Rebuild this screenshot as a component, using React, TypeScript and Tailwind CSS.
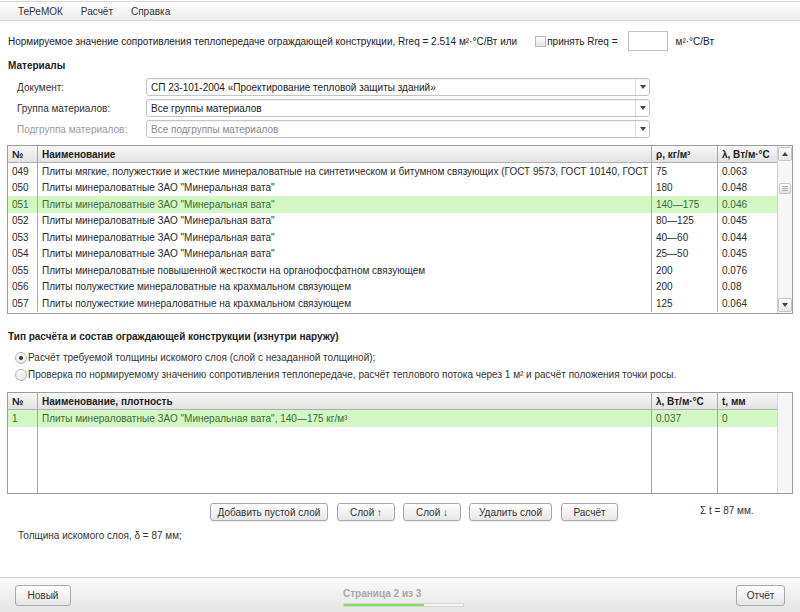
import React from 'react'

const rows = [
  ['049', 'Плиты мягкие, полужесткие и жесткие минераловатные на синтетическом и битумном связующих (ГОСТ 9573, ГОСТ 10140, ГОСТ', '75', '0.063'],
  ['050', 'Плиты минераловатные ЗАО "Минеральная вата"', '180', '0.048'],
  ['051', 'Плиты минераловатные ЗАО "Минеральная вата"', '140—175', '0.046'],
  ['052', 'Плиты минераловатные ЗАО "Минеральная вата"', '80—125', '0.045'],
  ['053', 'Плиты минераловатные ЗАО "Минеральная вата"', '40—60', '0.044'],
  ['054', 'Плиты минераловатные ЗАО "Минеральная вата"', '25—50', '0.045'],
  ['055', 'Плиты минераловатные повышенной жесткости на органофосфатном связующем', '200', '0.076'],
  ['056', 'Плиты полужесткие минераловатные на крахмальном связующем', '200', '0.08'],
  ['057', 'Плиты полужесткие минераловатные на крахмальном связующем', '125', '0.064'],
]

const cols = 'grid grid-cols-[29px_614px_66px_60px]'
const headCell = 'px-[4px] flex items-center font-bold text-[#222] whitespace-nowrap overflow-hidden'
const cell = 'px-[4px] flex items-center whitespace-nowrap overflow-hidden'

function Select({ text, muted }: { text: string; muted?: boolean }) {
  return (
    <div className="w-[504px] h-[18px] flex border border-[#c4c4c4] rounded-[3px] bg-white shadow-[inset_0_1px_1px_rgba(0,0,0,0.06)]">
      <div className={`flex-1 flex items-center pl-[4px] ${muted ? 'text-[#8a8a8a]' : 'text-[#222]'}`}>{text}</div>
      <div className="w-[14px] border-l border-[#dcdcdc] flex items-center justify-center">
        <svg width="6" height="4" viewBox="0 0 6 4"><path d="M0 0h6L3 4z" fill="#444" /></svg>
      </div>
    </div>
  )
}

function Btn({ children, w }: { children: React.ReactNode; w: string }) {
  return (
    <button className={`${w} h-[18px] border border-[#a9a9a9] rounded-[3px] bg-gradient-to-b from-white to-[#e6e6e6] text-[10px] text-[#333] flex items-center justify-center shadow-[0_1px_1px_rgba(0,0,0,0.08)]`}>
      {children}
    </button>
  )
}

function Radio({ checked }: { checked?: boolean }) {
  return (
    <span className="w-[12px] h-[12px] rounded-full border border-[#b5b5b5] bg-gradient-to-b from-white to-[#e6e6e6] flex items-center justify-center mr-[1px]">
      {checked && <span className="w-[4px] h-[4px] rounded-full bg-[#333]" />}
    </span>
  )
}

export default function App() {
  return (
    <div className="w-[800px] h-[612px] flex flex-col bg-white text-[10px] text-[#222] font-['Liberation_Sans',Arial,sans-serif] overflow-hidden">
      {/* menu */}
      <div className="h-[20px] mt-[1px] flex items-center gap-[18px] pl-[18px] border-y border-[#d6d6d6] bg-gradient-to-b from-white to-[#ececec] text-[#333]">
        <span>ТеРеМОК</span>
        <span>Расчёт</span>
        <span>Справка</span>
      </div>

      <div className="mt-[10px] h-[20px] flex items-center pl-[8px]">
        <span>Нормируемое значение сопротивления теплопередаче ограждающей конструкции, Rreq = 2.514 м²·°С/Вт или</span>
        <span className="ml-[18px] w-[11px] h-[11px] border border-[#b8b8b8] bg-gradient-to-b from-white to-[#e2e2e2]" />
        <span className="ml-[1px]">принять Rreq =</span>
        <span className="ml-[10px] w-[40px] h-[20px] border border-[#c4c4c4] bg-white" />
        <span className="ml-[8px]">м²·°С/Вт</span>
      </div>

      <div className="mt-[8px] h-[14px] pl-[8px] font-bold leading-[14px]">Материалы</div>

      <div className="mt-[5px] flex flex-col gap-[3px] pl-[17px]">
        <div className="flex items-center">
          <span className="w-[129px] text-[#333]">Документ:</span>
          <Select text="СП 23-101-2004 «Проектирование тепловой защиты зданий»" />
        </div>
        <div className="flex items-center">
          <span className="w-[129px] text-[#333]">Группа материалов:</span>
          <Select text="Все группы материалов" />
        </div>
        <div className="flex items-center">
          <span className="w-[129px] text-[#9a9a9a]">Подгруппа материалов:</span>
          <Select text="Все подгруппы материалов" muted />
        </div>
      </div>

      {/* materials table */}
      <div className="mt-[7px] ml-[7px] w-[786px] h-[169px] border border-[#9c9c9c] flex">
        <div className="flex-1 flex flex-col">
          <div className={`${cols} h-[17px] bg-gradient-to-b from-[#f8f8f8] to-[#e2e2e2] border-b border-[#b0b0b0]`}>
            <div className={headCell}>№</div>
            <div className={`${headCell} border-l border-[#a8a8a8]`}>Наименование</div>
            <div className={`${headCell} border-l border-[#a8a8a8]`}>ρ, кг/м³</div>
            <div className={`${headCell} border-l border-[#a8a8a8]`}>λ, Вт/м·°С</div>
          </div>
          {rows.map((r) => {
            const sel = r[0] === '051'
            return (
              <div key={r[0]} className={`${cols} h-[16.5px] ${sel ? 'bg-[#d3f8c4] text-[#3c6b34]' : 'text-[#2a2a2a]'}`}>
                <div className={cell}>{r[0]}</div>
                <div className={`${cell} border-l border-[#a8a8a8]`}>{r[1]}</div>
                <div className={`${cell} border-l border-[#a8a8a8]`}>{r[2]}</div>
                <div className={`${cell} border-l border-[#a8a8a8]`}>{r[3]}</div>
              </div>
            )
          })}
        </div>
        <div className="w-[17px] border-l border-[#cfcfcf] bg-[#f7f7f7] flex flex-col items-center py-[1px]">
          <div className="w-[14px] h-[14px] border border-[#c6c6c6] rounded-[2px] bg-gradient-to-b from-white to-[#e8e8e8] flex items-center justify-center">
            <svg width="6" height="4" viewBox="0 0 6 4"><path d="M0 4h6L3 0z" fill="#444" /></svg>
          </div>
          <div className="mt-[22px] w-[12px] h-[11px] border border-[#c6c6c6] rounded-[2px] bg-gradient-to-b from-white to-[#e4e4e4] flex flex-col items-center justify-center gap-[1px]">
            <span className="w-[6px] h-px bg-[#aaa]" />
            <span className="w-[6px] h-px bg-[#aaa]" />
            <span className="w-[6px] h-px bg-[#aaa]" />
          </div>
          <div className="mt-auto w-[14px] h-[14px] border border-[#c6c6c6] rounded-[2px] bg-gradient-to-b from-white to-[#e8e8e8] flex items-center justify-center">
            <svg width="6" height="4" viewBox="0 0 6 4"><path d="M0 0h6L3 4z" fill="#444" /></svg>
          </div>
        </div>
      </div>

      <div className="mt-[16px] h-[14px] pl-[8px] font-bold leading-[14px]">Тип расчёта и состав ограждающей конструкции (изнутри наружу)</div>

      <div className="mt-[5px] pl-[15px] text-[#333]">
        <div className="h-[17px] flex items-center">
          <Radio checked />
          <span>Расчёт требуемой толщины искомого слоя (слой с незаданной толщиной);</span>
        </div>
        <div className="h-[17px] flex items-center">
          <Radio />
          <span>Проверка по нормируемому значению сопротивления теплопередаче, расчёт теплового потока через 1 м² и расчёт положения точки росы.</span>
        </div>
      </div>

      {/* layers table */}
      <div className="mt-[9px] ml-[7px] w-[786px] h-[102px] border border-[#9c9c9c] flex">
        <div className="flex-1 flex flex-col">
          <div className={`${cols} h-[17px] bg-gradient-to-b from-[#f8f8f8] to-[#e2e2e2] border-b border-[#b0b0b0]`}>
            <div className={headCell}>№</div>
            <div className={`${headCell} border-l border-[#a8a8a8]`}>Наименование, плотность</div>
            <div className={`${headCell} border-l border-[#a8a8a8]`}>λ, Вт/м·°С</div>
            <div className={`${headCell} border-l border-[#a8a8a8]`}>t, мм</div>
          </div>
          <div className={`${cols} h-[17px] bg-[#d3f8c4] text-[#3c6b34]`}>
            <div className={cell}>1</div>
            <div className={`${cell} border-l border-[#a8a8a8]`}>Плиты минераловатные ЗАО "Минеральная вата", 140—175 кг/м³</div>
            <div className={`${cell} border-l border-[#a8a8a8]`}>0.037</div>
            <div className={`${cell} border-l border-[#a8a8a8]`}>0</div>
          </div>
          <div className={`${cols} flex-1`}>
            <div />
            <div className="border-l border-[#a8a8a8]" />
            <div className="border-l border-[#a8a8a8]" />
            <div className="border-l border-[#a8a8a8]" />
          </div>
        </div>
        <div className="w-[17px] border-l border-[#d6d6d6] bg-[#f6f6f6]" />
      </div>

      <div className="mt-[9px] h-[18px] flex items-center pl-[210px]">
        <Btn w="w-[118px]">Добавить пустой слой</Btn>
        <div className="ml-[9px]"><Btn w="w-[58px]">Слой ↑</Btn></div>
        <div className="ml-[8px]"><Btn w="w-[58px]">Слой ↓</Btn></div>
        <div className="ml-[8px]"><Btn w="w-[83px]">Удалить слой</Btn></div>
        <div className="ml-[9px]"><Btn w="w-[57px]">Расчёт</Btn></div>
        <span className="ml-[82px] -mt-[3px] text-[#333]">Σ t = 87 мм.</span>
      </div>

      <div className="mt-[8px] h-[14px] pl-[18px] leading-[14px] text-[#333]">Толщина искомого слоя, δ = 87 мм;</div>

      {/* footer */}
      <div className="mt-auto h-[35px] border-t border-[#cfcfcf] bg-gradient-to-b from-[#fbfbfb] to-[#e4e4e4] flex items-center px-[15px]">
        <button className="w-[56px] h-[21px] border border-[#a9a9a9] rounded-[3px] bg-gradient-to-b from-white to-[#e6e6e6] text-[10px] text-[#333]">Новый</button>
        <div className="flex-1 flex flex-col items-center pt-[3px]">
          <div className="w-[121px] text-[10px] font-bold text-[#a8a8a8] leading-[13px]">Страница 2 из 3</div>
          <div className="mt-[3px] w-[121px] h-[4px] border border-[#d6d6d6] bg-[#f4f4f4] flex">
            <div className="h-full bg-[#7ee35a]" style={{ width: '67%' }} />
          </div>
        </div>
        <button className="w-[49px] h-[21px] border border-[#a9a9a9] rounded-[3px] bg-gradient-to-b from-white to-[#e6e6e6] text-[10px] text-[#333]">Отчёт</button>
      </div>
    </div>
  )
}
